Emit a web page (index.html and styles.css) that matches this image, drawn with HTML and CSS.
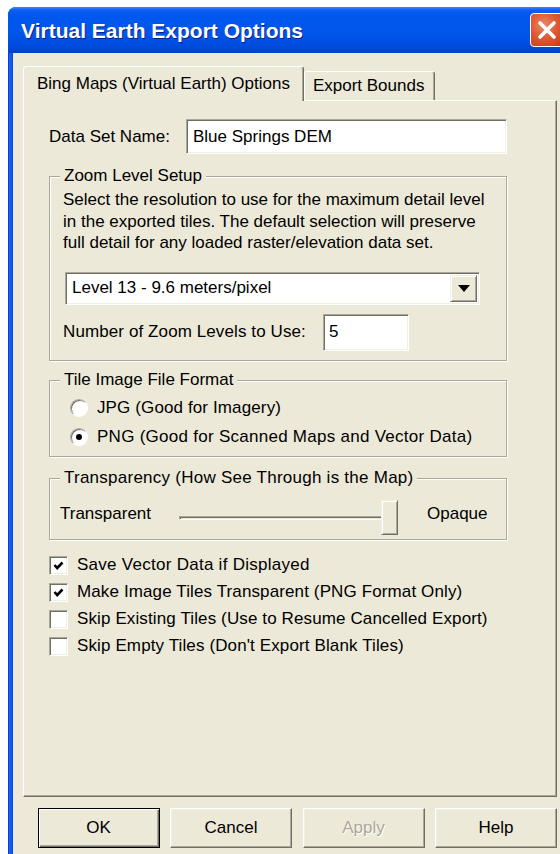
FILE: index.html
```html
<!DOCTYPE html>
<html lang="en">
<head>
<meta charset="utf-8">
<title>Virtual Earth Export Options</title>
<link rel="stylesheet" href="styles.css">
</head>
<body>
<div class="window">
  <div class="titlebar">
    <span class="title">Virtual Earth Export Options</span>
    <div class="close">
      <svg width="24" height="24" viewBox="0 0 24 24"><path d="M5 5 L19 19 M19 5 L5 19" stroke="#fff" stroke-width="3.6" stroke-linecap="round"/></svg>
    </div>
  </div>
  <div class="client">
    <div class="tabs">
      <div class="tab active">Bing Maps (Virtual Earth) Options</div>
      <div class="tab">Export Bounds</div>
    </div>
    <div class="panel">
      <div class="row name-row">
        <span class="label name-label">Data Set Name:</span>
        <div class="field name-field">Blue Springs DEM</div>
      </div>

      <div class="group zoom-group">
        <span class="group-title">Zoom Level Setup</span>
        <p class="desc">Select the resolution to use for the maximum detail level<br>in the exported tiles. The default selection will preserve<br>full detail for any loaded raster/elevation data set.</p>
        <div class="combo">
          <span class="combo-text">Level 13 - 9.6 meters/pixel</span>
          <span class="combo-btn"><svg width="12" height="7" viewBox="0 0 12 7"><path d="M0 0 H12 L6 7 Z" fill="#000"/></svg></span>
        </div>
        <div class="row levels-row">
          <span class="label levels-label">Number of Zoom Levels to Use:</span>
          <div class="field levels-field">5</div>
        </div>
      </div>

      <div class="group format-group">
        <span class="group-title">Tile Image File Format</span>
        <div class="option">
          <span class="radio"></span>
          <span>JPG (Good for Imagery)</span>
        </div>
        <div class="option">
          <span class="radio on"></span>
          <span class="wide">PNG (Good for Scanned Maps and Vector Data)</span>
        </div>
      </div>

      <div class="group alpha-group">
        <span class="group-title wide">Transparency (How See Through is the Map)</span>
        <div class="slider-row">
          <span class="end-label">Transparent</span>
          <div class="slider">
            <span class="track"></span>
            <span class="thumb"></span>
          </div>
          <span class="end-label opaque">Opaque</span>
        </div>
      </div>

      <div class="checks">
        <div class="option">
          <span class="check"><svg width="13" height="13" viewBox="0 0 13 13"><path d="M2.5 6 L5.2 9 L10.5 3.5" fill="none" stroke="#000" stroke-width="2.6"/></svg></span>
          <span class="wide">Save Vector Data if Displayed</span>
        </div>
        <div class="option">
          <span class="check"><svg width="13" height="13" viewBox="0 0 13 13"><path d="M2.5 6 L5.2 9 L10.5 3.5" fill="none" stroke="#000" stroke-width="2.6"/></svg></span>
          <span>Make Image Tiles Transparent (PNG Format Only)</span>
        </div>
        <div class="option">
          <span class="check"></span>
          <span>Skip Existing Tiles (Use to Resume Cancelled Export)</span>
        </div>
        <div class="option">
          <span class="check"></span>
          <span>Skip Empty Tiles (Don't Export Blank Tiles)</span>
        </div>
      </div>
    </div>

    <div class="buttons">
      <div class="btn default">OK</div>
      <div class="btn">Cancel</div>
      <div class="btn disabled">Apply</div>
      <div class="btn">Help</div>
    </div>
  </div>
</div>
</body>
</html>
```

FILE: styles.css
```css
html, body {
  overflow: hidden;
}

body {
  margin: 0;
  padding: 7px 0 0 8px;
  height: 854px;
  box-sizing: border-box;
  background: #fff;
  font-family: "Liberation Sans", Arial, sans-serif;
  font-size: 17px;
  color: #000;
}

/* window frame */
.window {
  width: 564px;
  height: 860px;
  border-radius: 8px 8px 0 0;
  background: linear-gradient(to right, #0831d9 0, #1a66f2 2px, #0b52e6 4px, #0845d8 5px);
  display: flex;
  flex-direction: column;
}

.titlebar {
  height: 46px;
  flex: none;
  border-radius: 8px 8px 0 0;
  background: linear-gradient(#3d86ff 0, #0b5ff4 3px, #0058ee 8px, #0056ea 26px, #004ce0 38px, #0042c9 46px);
  display: flex;
  align-items: center;
  justify-content: space-between;
  padding: 0 8px 0 13px;
}

.title {
  color: #fff;
  font-weight: bold;
  font-size: 21px;
  text-shadow: 1px 1px 0 #0a1f8c;
  padding-top: 1px;
}

.close {
  width: 34px;
  height: 34px;
  box-sizing: border-box;
  border: 1.5px solid #fff;
  border-radius: 4px;
  background: radial-gradient(circle at 40% 35%, #eb8a6a 0, #df5a33 45%, #c4391a 100%);
  display: flex;
  align-items: center;
  justify-content: center;
}

.client {
  flex: 1;
  margin: 0 5px;
  background: #ece9d8;
  padding: 13px 10px 0 10px;
}

/* tabs */
.tabs {
  display: flex;
  align-items: flex-end;
  height: 34px;
}

.tab {
  box-sizing: border-box;
  height: 29px;
  line-height: 28px;
  padding: 0 10px 0 8px;
  border: 1px solid;
  border-bottom: none;
  border-color: #fff #716f64 transparent #fff;
  box-shadow: inset -1px 0 #aca899;
  border-radius: 3px 3px 0 0;
  background: #ece9d8;
}

.tab.active {
  height: 35px;
  margin-bottom: -1px;
  padding: 0 13px 0 13px;
  line-height: 33px;
  position: relative;
  z-index: 1;
}

.panel {
  box-sizing: border-box;
  height: 697px;
  border: 1px solid;
  border-color: #fff #716f64 #716f64 #fff;
  box-shadow: inset -1px -1px #aca899;
  padding: 18px 0 0 25px;
}

.row {
  display: flex;
  align-items: center;
}

.label {
  flex: none;
}

.name-label {
  width: 137px;
}

.levels-label {
  width: 260px;
  letter-spacing: 0.1px;
}

/* sunken edit fields */
.field {
  box-sizing: border-box;
  background: #fff;
  border: 1px solid;
  border-color: #aca899 #fff #fff #aca899;
  box-shadow: inset 1px 1px #716f64, inset -1px -1px #f1efe2;
  padding: 0 6px;
  display: flex;
  align-items: center;
}

.name-field {
  width: 321px;
  height: 35px;
}

.levels-field {
  width: 86px;
  height: 37px;
  padding-left: 5px;
}

/* etched group boxes */
.group {
  position: relative;
  width: 458px;
  box-sizing: border-box;
  border: 1px solid #aca899;
  box-shadow: inset 1px 1px #fff, 1px 1px #fff;
}

.group-title {
  position: absolute;
  top: -11px;
  left: 10px;
  line-height: 20px;
  padding: 0 4px;
  background: #ece9d8;
}

.wide {
  letter-spacing: 0.25px;
}

.zoom-group {
  margin-top: 22px;
  padding: 12px 0 9px 13px;
}

.desc {
  margin: 0;
  line-height: 21.5px;
}

.combo {
  margin: 18px 0 0 2px;
  width: 415px;
  height: 33px;
  box-sizing: border-box;
  background: #fff;
  border: 1px solid;
  border-color: #aca899 #fff #fff #aca899;
  box-shadow: inset 1px 1px #716f64, inset -1px -1px #f1efe2;
  display: flex;
  align-items: center;
  justify-content: space-between;
  padding: 2px 2px 2px 6px;
}

.combo-btn {
  width: 27px;
  height: 27px;
  box-sizing: border-box;
  background: #ece9d8;
  border: 1px solid;
  border-color: #f1efe2 #716f64 #716f64 #f1efe2;
  box-shadow: inset 1px 1px #fff, inset -1px -1px #aca899;
  display: flex;
  align-items: center;
  justify-content: center;
}

.levels-row {
  margin-top: 9px;
}

.format-group {
  margin-top: 19px;
  padding: 13px 0 4px 20px;
}

.option {
  display: flex;
  align-items: center;
  height: 29px;
  gap: 9px;
  letter-spacing: 0.12px;
}

.option .wide {
  letter-spacing: 0.27px;
}

.radio {
  width: 18px;
  height: 18px;
  box-sizing: border-box;
  border-radius: 50%;
  background: #fff;
  border: 1px solid;
  border-color: #aca899 #fff #fff #aca899;
  box-shadow: inset 1px 1px #716f64;
  display: flex;
  align-items: center;
  justify-content: center;
}

.radio.on::after {
  content: "";
  width: 6px;
  height: 6px;
  border-radius: 50%;
  background: #000;
}

.alpha-group {
  margin-top: 21px;
  padding: 21px 0 4px 10px;
}

.slider-row {
  display: flex;
  align-items: flex-start;
  height: 35px;
}

.end-label {
  width: 119px;
  line-height: 27px;
}

.end-label.opaque {
  width: auto;
  margin-left: 29px;
}

.slider {
  position: relative;
  width: 219px;
  height: 35px;
}

.track {
  position: absolute;
  left: 0;
  right: 12px;
  top: 16px;
  height: 4px;
  box-sizing: border-box;
  border: 1px solid;
  border-color: #aca899 #fff #fff #aca899;
  box-shadow: inset 1px 1px #716f64;
}

.thumb {
  position: absolute;
  right: 0;
  top: 0;
  width: 17px;
  height: 35px;
  box-sizing: border-box;
  background: #ece9d8;
  border: 1px solid;
  border-color: #f1efe2 #716f64 #716f64 #f1efe2;
  box-shadow: inset 1px 1px #fff, inset -1px -1px #aca899;
}

.checks {
  margin-top: 12px;
}

.checks .option {
  height: 27px;
}

.check {
  width: 19px;
  height: 19px;
  box-sizing: border-box;
  background: #fff;
  border: 1px solid;
  border-color: #aca899 #fff #fff #aca899;
  box-shadow: inset 1px 1px #716f64, inset -1px -1px #f1efe2;
  display: flex;
  align-items: center;
  justify-content: center;
}

/* dialog buttons */
.buttons {
  display: flex;
  justify-content: flex-end;
  gap: 10.5px;
  margin-top: 11px;
}

.btn {
  width: 122px;
  height: 40px;
  box-sizing: border-box;
  border: 1px solid;
  border-color: #fff #716f64 #716f64 #fff;
  box-shadow: inset -1px -1px #aca899, inset 1px 1px #f1efe2;
  display: flex;
  align-items: center;
  justify-content: center;
}

.btn.default {
  border-color: #000;
  box-shadow: inset 1px 1px #fff, inset -1px -1px #716f64, inset -2px -2px #aca899;
}

.btn.disabled {
  color: #aca899;
  text-shadow: 1px 1px 0 #fff;
}
```
